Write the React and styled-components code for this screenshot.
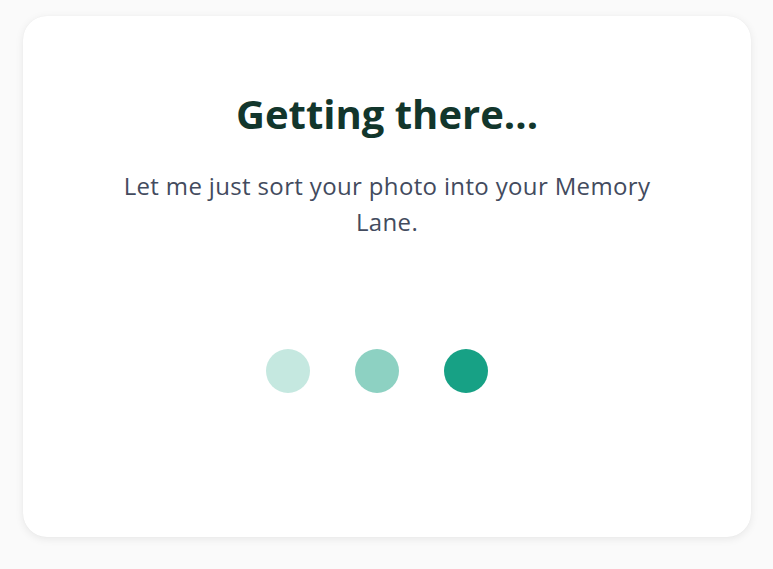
import React from "react";
import styled, { createGlobalStyle } from "styled-components";

const Global = createGlobalStyle`
  html, body { margin: 0; padding: 0; background: #fafafa; }
  body { font-family: "Open Sans", "Noto Sans", sans-serif; }
`;

const Page = styled.div`
  width: 773px;
  height: 569px;
  box-sizing: border-box;
  padding: 16px 22px 32px 23px;
  display: flex;
`;

const Card = styled.div`
  flex: 1;
  background: #ffffff;
  border-radius: 24px;
  box-shadow: 0 2px 8px rgba(0, 0, 0, 0.08), 0 0 1px rgba(0, 0, 0, 0.06);
  display: flex;
  flex-direction: column;
  align-items: center;
  padding-top: 74px;
  box-sizing: border-box;
`;

const Title = styled.h1`
  margin: 0;
  font-size: 40px;
  line-height: 48px;
  font-weight: 700;
  color: #12362c;
`;

const Message = styled.p`
  margin: 30px 0 0;
  max-width: 560px;
  text-align: center;
  font-size: 24px;
  line-height: 36px;
  letter-spacing: 0.35px;
  color: #434b5e;
`;

const Dots = styled.div`
  display: flex;
  gap: 45px;
  margin-top: 109px;
  padding-right: 20px;
`;

const Dot = styled.span`
  width: 44px;
  height: 44px;
  border-radius: 50%;
  background: ${(p) => p.$color};
`;

export default function App() {
  return (
    <>
      <Global />
      <Page>
        <Card>
          <Title>Getting there...</Title>
          <Message>Let me just sort your photo into your Memory Lane.</Message>
          <Dots>
            <Dot $color="#c5e8e0" />
            <Dot $color="#8dd1c2" />
            <Dot $color="#17a185" />
          </Dots>
        </Card>
      </Page>
    </>
  );
}
